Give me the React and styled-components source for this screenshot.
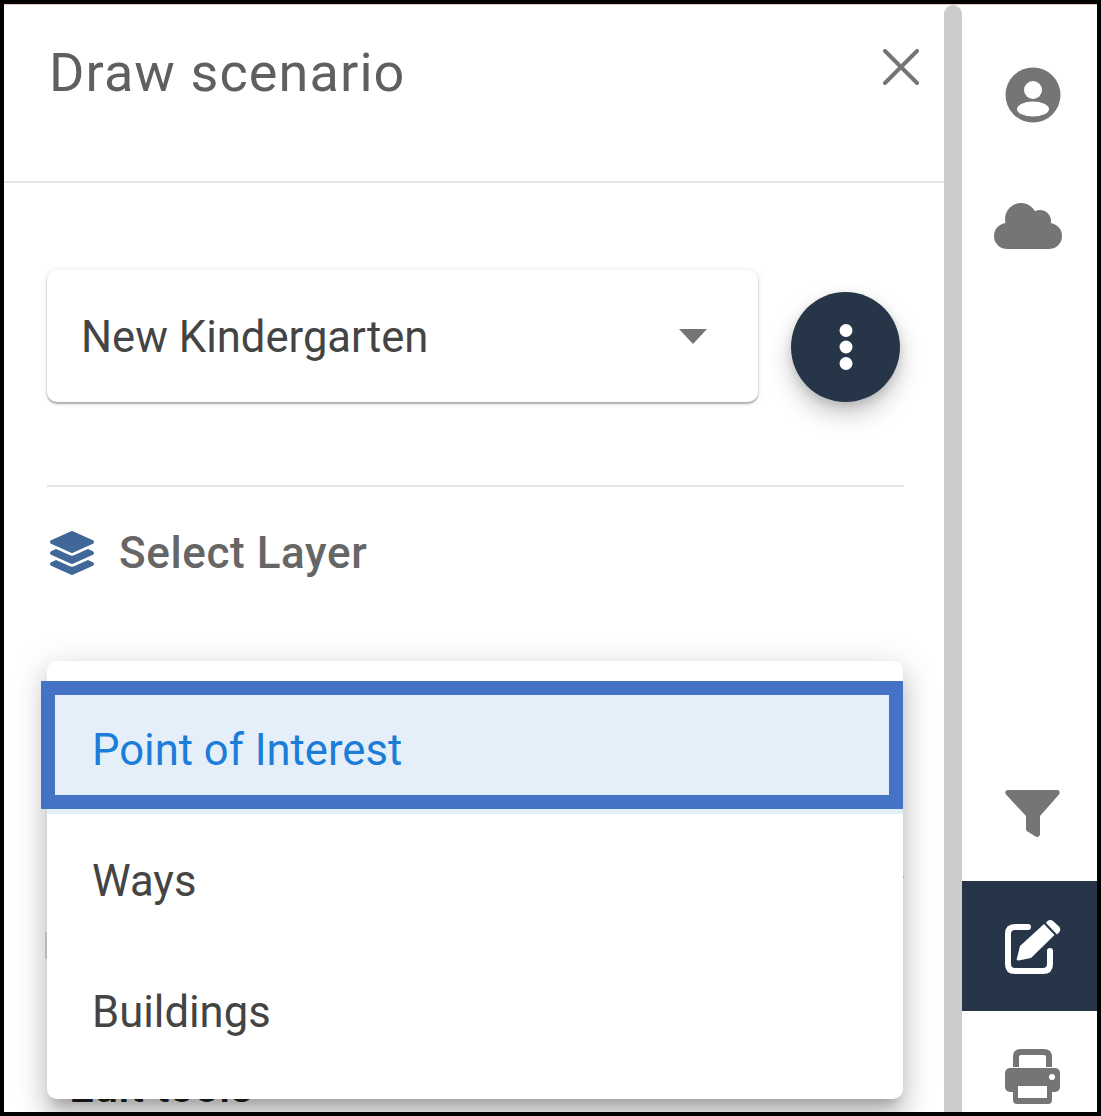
import React from "react";
import styled, { createGlobalStyle } from "styled-components";
import { FaLayerGroup } from "react-icons/fa";

const GlobalStyle = createGlobalStyle`
  html, body {
    margin: 0;
    padding: 0;
    background: #000;
  }
  * {
    box-sizing: border-box;
  }
`;

const layers = ["Point of Interest", "Ways", "Buildings"];

function UserIcon() {
  return (
    <svg width="56" height="56" viewBox="0 0 56 56">
      <circle cx="28" cy="28" r="27.5" fill="#757575" />
      <circle cx="28" cy="23" r="9" fill="#fff" />
      <ellipse cx="28" cy="42" rx="16" ry="7.5" fill="#fff" />
    </svg>
  );
}

function CloudIcon() {
  return (
    <svg width="70" height="48" viewBox="0 0 70 48" fill="#757575">
      <circle cx="14" cy="34" r="13" />
      <circle cx="28" cy="17" r="16" />
      <circle cx="47" cy="19" r="11" />
      <circle cx="56" cy="34" r="13" />
      <rect x="14" y="20" width="42" height="27" />
    </svg>
  );
}

function FilterIcon() {
  return (
    <svg width="55" height="47" viewBox="0 0 55 47">
      <path
        d="M3 0H52c2.5 0 3.5 2.5 2 4.5L35 26v18c0 2.5-2.5 3.5-4.5 2.5l-8-5c-1-.6-1.5-1.5-1.5-2.5V26L1 4.5C-.5 2.5.5 0 3 0z"
        fill="#757575"
      />
    </svg>
  );
}

function EditIcon() {
  return (
    <svg width="57" height="57" viewBox="0 0 57 57">
      <path
        d="M24 9H11q-7 0-7 7V46q0 7 7 7H39q7 0 7-7V33"
        stroke="#fff"
        strokeWidth="6"
        strokeLinecap="round"
        fill="none"
      />
      <path d="M16 28 40 6 50.5 17 27 40 14.5 42.5q-2 .3-1.7-1.7z" fill="#fff" />
      <path d="M43 3.5q3-2.5 6-.5l6 5.5q2.5 3 0 6L53 16.5 42 5z" fill="#fff" />
    </svg>
  );
}

function PrintIcon() {
  return (
    <svg width="55" height="55" viewBox="0 0 55 55">
      <path d="M11 18V8q0-5 5-5H39q5 0 5 5V18" stroke="#757575" strokeWidth="6" fill="none" />
      <rect x="0" y="19" width="55" height="24" rx="5" fill="#757575" />
      <rect x="8" y="30" width="39" height="25" rx="4" fill="#757575" />
      <rect x="13" y="37" width="29" height="12" fill="#fff" />
      <circle cx="47" cy="28" r="3" fill="#fff" />
    </svg>
  );
}

function CloseIcon() {
  return (
    <svg width="36" height="36" viewBox="0 0 36 36">
      <path d="M2 2 34 34M34 2 2 34" stroke="#757575" strokeWidth="4" strokeLinecap="round" />
    </svg>
  );
}

function DotsIcon() {
  return (
    <svg width="14" height="46" viewBox="0 0 14 46">
      <circle cx="7" cy="6.5" r="6.5" fill="#fff" />
      <circle cx="7" cy="23" r="6.5" fill="#fff" />
      <circle cx="7" cy="39.5" r="6.5" fill="#fff" />
    </svg>
  );
}

export default function App() {
  return (
    <>
      <GlobalStyle />
      <Frame>
        <TopEdge />
        <Columns>
          <Panel>
            <PanelHeader>
              <Title>Draw scenario</Title>
              <CloseButton>
                <CloseIcon />
              </CloseButton>
            </PanelHeader>
            <PanelBody>
              <ScenarioRow>
                <ScenarioSelect>
                  <ScenarioName>New Kindergarten</ScenarioName>
                  <Caret />
                </ScenarioSelect>
                <RoundButton>
                  <DotsIcon />
                </RoundButton>
              </ScenarioRow>
              <Divider />
              <SectionTitle>
                <FaLayerGroup size={44} color="#3f6899" />
                <span>Select Layer</span>
              </SectionTitle>
              <LayerSlot>
                <BehindDivider />
                <BehindTool />
                <BehindTitle>Edit tools</BehindTitle>
                <LayerMenu>
                  {layers.map((name, i) => (
                    <LayerItem key={name} $active={i === 0}>
                      {name}
                    </LayerItem>
                  ))}
                </LayerMenu>
                <Highlight />
              </LayerSlot>
            </PanelBody>
          </Panel>
          <ScrollTrack />
          <SideBar>
            <SideTop>
              <SideButton $h={132}>
                <UserIcon />
              </SideButton>
              <SideButton $h={130} $pr={9}>
                <CloudIcon />
              </SideButton>
            </SideTop>
            <SideButton $h={135}>
              <FilterIcon />
            </SideButton>
            <SideButton $h={130} $active>
              <EditIcon />
            </SideButton>
            <SideButton $h={130}>
              <PrintIcon />
            </SideButton>
          </SideBar>
        </Columns>
      </Frame>
    </>
  );
}

const Frame = styled.div`
  width: 1101px;
  height: 1116px;
  display: flex;
  flex-direction: column;
  background: #fff;
  border: 4px solid #000;
  overflow: hidden;
  font-family: Roboto, "Liberation Sans", sans-serif;
`;

const TopEdge = styled.div`
  height: 1px;
  flex: none;
  background: #e3c5bd;
`;

const Columns = styled.div`
  flex: 1;
  min-height: 0;
  display: flex;
`;

const Panel = styled.div`
  width: 940px;
  flex: none;
  overflow: hidden;
`;

const PanelHeader = styled.div`
  height: 178px;
  padding: 37px 25px 0 45px;
  display: flex;
  align-items: flex-start;
  justify-content: space-between;
  border-bottom: 2px solid #e4e4e4;
`;

const Title = styled.div`
  font-size: 54px;
  line-height: 62px;
  font-weight: 400;
  letter-spacing: 1.1px;
  color: #5f5f5f;
`;

const CloseButton = styled.div`
  margin-top: 7px;
  display: flex;
`;

const PanelBody = styled.div`
  padding: 87px 40px 0 43px;
`;

const ScenarioRow = styled.div`
  display: flex;
  align-items: flex-start;
  gap: 33px;
`;

const ScenarioSelect = styled.div`
  width: 711px;
  height: 132px;
  padding: 0 51px 0 34px;
  display: flex;
  align-items: center;
  justify-content: space-between;
  background: #fff;
  border-radius: 10px;
  box-shadow: 0 2px 2px rgba(0, 0, 0, 0.3), 0 0 6px rgba(0, 0, 0, 0.1);
`;

const ScenarioName = styled.span`
  margin-top: 2px;
  font-size: 43.6px;
  color: #444;
`;

const Caret = styled.span`
  border-style: solid;
  border-width: 15px 14px 0;
  border-color: #757575 transparent transparent;
`;

const RoundButton = styled.div`
  width: 109px;
  height: 110px;
  margin-top: 22px;
  border-radius: 50%;
  background: #273548;
  display: flex;
  align-items: center;
  justify-content: center;
  box-shadow: 0 12px 24px rgba(0, 0, 0, 0.22), 0 4px 10px rgba(0, 0, 0, 0.12);
`;

const Divider = styled.div`
  height: 2px;
  margin-top: 83px;
  background: #e4e4e4;
`;

const SectionTitle = styled.div`
  margin-top: 42px;
  padding-left: 3px;
  display: flex;
  align-items: center;
  gap: 25px;
  font-size: 44px;
  line-height: 48px;
  font-weight: 500;
  letter-spacing: 0.6px;
  color: #666;
`;

const LayerSlot = styled.div`
  position: relative;
  height: 460px;
  margin-top: 84px;
  padding-top: 215px;
`;

const BehindDivider = styled.div`
  height: 2px;
  width: 857px;
  background: #d0d0d0;
`;

const BehindTool = styled.div`
  width: 10px;
  height: 27px;
  margin: 54px 0 0 -2px;
  background: #d4dae2;
`;

const BehindTitle = styled.div`
  margin-top: 104px;
  padding-left: 22px;
  font-size: 44px;
  line-height: 48px;
  font-weight: 500;
  color: #222;
`;

const LayerMenu = styled.div`
  position: absolute;
  top: 0;
  left: 0;
  width: 856px;
  height: 438px;
  padding-top: 22px;
  background: #fff;
  border-radius: 10px;
  box-shadow: 0 12px 12px -7px rgba(0, 0, 0, 0.2), 0 19px 24px 2px rgba(0, 0, 0, 0.14),
    0 7px 33px 5px rgba(0, 0, 0, 0.12);
`;

const LayerItem = styled.div`
  height: 131px;
  padding: 4px 0 0 45px;
  display: flex;
  align-items: center;
  font-size: 43.6px;
  color: ${(p) => (p.$active ? "#1c7dd8" : "#444")};
  background: ${(p) => (p.$active ? "#e5eff9" : "transparent")};
`;

const Highlight = styled.div`
  position: absolute;
  top: 20px;
  left: -6px;
  width: 862px;
  height: 128px;
  border: 14px solid #4472c4;
`;

const ScrollTrack = styled.div`
  width: 18px;
  flex: none;
  background: #ccc;
  border-radius: 9px 9px 0 0;
`;

const SideBar = styled.div`
  flex: 1;
  display: flex;
  flex-direction: column;
  overflow: hidden;
  background: #fff;
`;

const SideTop = styled.div`
  height: 741px;
  flex: none;
  padding-top: 24px;
  display: flex;
  flex-direction: column;
`;

const SideButton = styled.div`
  height: ${(p) => p.$h}px;
  flex: none;
  padding-left: 6px;
  padding-right: ${(p) => p.$pr || 0}px;
  display: flex;
  align-items: center;
  justify-content: center;
  background: ${(p) => (p.$active ? "#273548" : "transparent")};
`;
